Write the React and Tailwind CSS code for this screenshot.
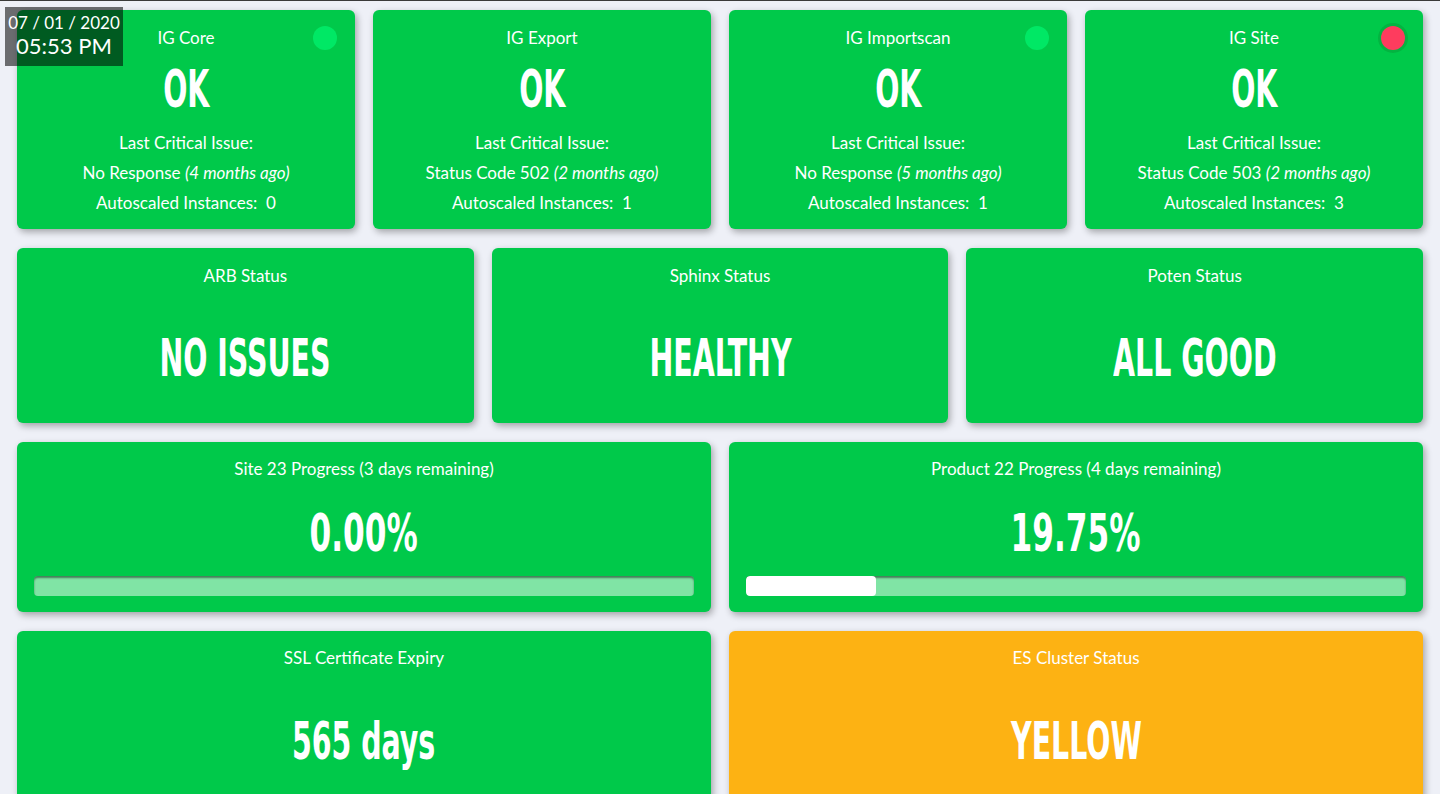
const font = "font-['DejaVu_Sans_Condensed',sans-serif] font-bold text-[51px] leading-none inline-block whitespace-nowrap ";
const big = font + "scale-x-[0.62]";
const bigNum = font + "scale-x-[0.68]";

const cores = [
  { name: "IG Core", issue: "No Response", ago: "(4 months ago)", inst: 0, dot: "green" },
  { name: "IG Export", issue: "Status Code 502", ago: "(2 months ago)", inst: 1, dot: null },
  { name: "IG Importscan", issue: "No Response", ago: "(5 months ago)", inst: 1, dot: "green" },
  { name: "IG Site", issue: "Status Code 503", ago: "(2 months ago)", inst: 3, dot: "red" },
];

const statuses = [
  { title: "ARB Status", value: "NO ISSUES" },
  { title: "Sphinx Status", value: "HEALTHY" },
  { title: "Poten Status", value: "ALL GOOD" },
];

const progress = [
  { title: "Site 23 Progress (3 days remaining)", value: 0 },
  { title: "Product 22 Progress (4 days remaining)", value: 19.75 },
];

function Card({ className = "", children }) {
  return (
    <div className={"relative flex flex-col items-center rounded-md text-white shadow-[2px_3px_7px_rgba(0,0,0,0.32)] " + className}>
      {children}
    </div>
  );
}

function Dot({ color }) {
  if (color === "green") {
    return <span className="absolute top-4 right-[18px] w-6 h-6 rounded-full bg-[#00e865]" />;
  }
  if (color === "red") {
    return (
      <span className="absolute top-[13px] right-[15px] w-[30px] h-[30px] rounded-full bg-[#03b441] flex items-center justify-center">
        <span className="w-6 h-6 rounded-full bg-[#fe3c5e]" />
      </span>
    );
  }
  return null;
}

export default function App() {
  return (
    <div className="relative min-h-[794px] bg-[#eef0f7] border-t border-[#3a3a3a] px-[17px] pt-[9px] font-['Lato',sans-serif] overflow-hidden">
      <div className="absolute top-[6px] left-[5px] w-[118px] h-[59px] bg-black/55 text-white flex flex-col items-center z-10">
        <div className="text-[17px] leading-[20px] mt-[6px]">07 / 01 / 2020</div>
        <div className="text-[22px] leading-[26px]">05:53 PM</div>
      </div>

      <div className="grid grid-cols-4 gap-[18px]">
        {cores.map((c) => (
          <Card key={c.name} className="bg-[#00c94a] h-[219px] pt-4">
            <Dot color={c.dot} />
            <div className="text-[17px] leading-6">{c.name}</div>
            <div className="h-[78px] flex items-center justify-center">
              <span className={big}>OK</span>
            </div>
            <div className="text-[17px] leading-[30px]">Last Critical Issue:</div>
            <div className="text-[17px] leading-[30px]">
              {c.issue} <i>{c.ago}</i>
            </div>
            <div className="text-[17px] leading-[30px] whitespace-pre">Autoscaled Instances:  {c.inst}</div>
          </Card>
        ))}
      </div>

      <div className="grid grid-cols-3 gap-[18px] mt-[19px]">
        {statuses.map((s) => (
          <Card key={s.title} className="bg-[#00c94a] h-[175px] pt-4">
            <div className="text-[17px] leading-6">{s.title}</div>
            <div className="h-[140px] pt-[6px] flex items-center justify-center">
              <span className={big}>{s.value}</span>
            </div>
          </Card>
        ))}
      </div>

      <div className="grid grid-cols-2 gap-[18px] mt-[19px]">
        {progress.map((p) => (
          <Card key={p.title} className="bg-[#00c94a] h-[170px] pt-[15px] px-[17px]">
            <div className="text-[17px] leading-6">{p.title}</div>
            <div className="h-[95px] pt-[10px] flex items-center justify-center">
              <span className={bigNum}>{p.value.toFixed(2)}%</span>
            </div>
            <div className="w-full h-5 rounded-[4px] bg-white/50 shadow-[inset_0_2px_2px_rgba(0,0,0,0.45)] overflow-hidden">
              <div className="h-full rounded-[4px] bg-white" style={{ width: p.value + "%" }} />
            </div>
          </Card>
        ))}
      </div>

      <div className="grid grid-cols-2 gap-[18px] mt-[19px]">
        <Card className="bg-[#00c94a] h-[175px] pt-[15px]">
          <div className="text-[17px] leading-6">SSL Certificate Expiry</div>
          <div className="h-[142px] pt-[6px] flex items-center justify-center">
            <span className={big}>565 days</span>
          </div>
        </Card>
        <Card className="bg-[#fdb213] h-[175px] pt-[15px]">
          <div className="text-[17px] leading-6">ES Cluster Status</div>
          <div className="h-[142px] pt-[6px] flex items-center justify-center">
            <span className={big}>YELLOW</span>
          </div>
        </Card>
      </div>
    </div>
  );
}
